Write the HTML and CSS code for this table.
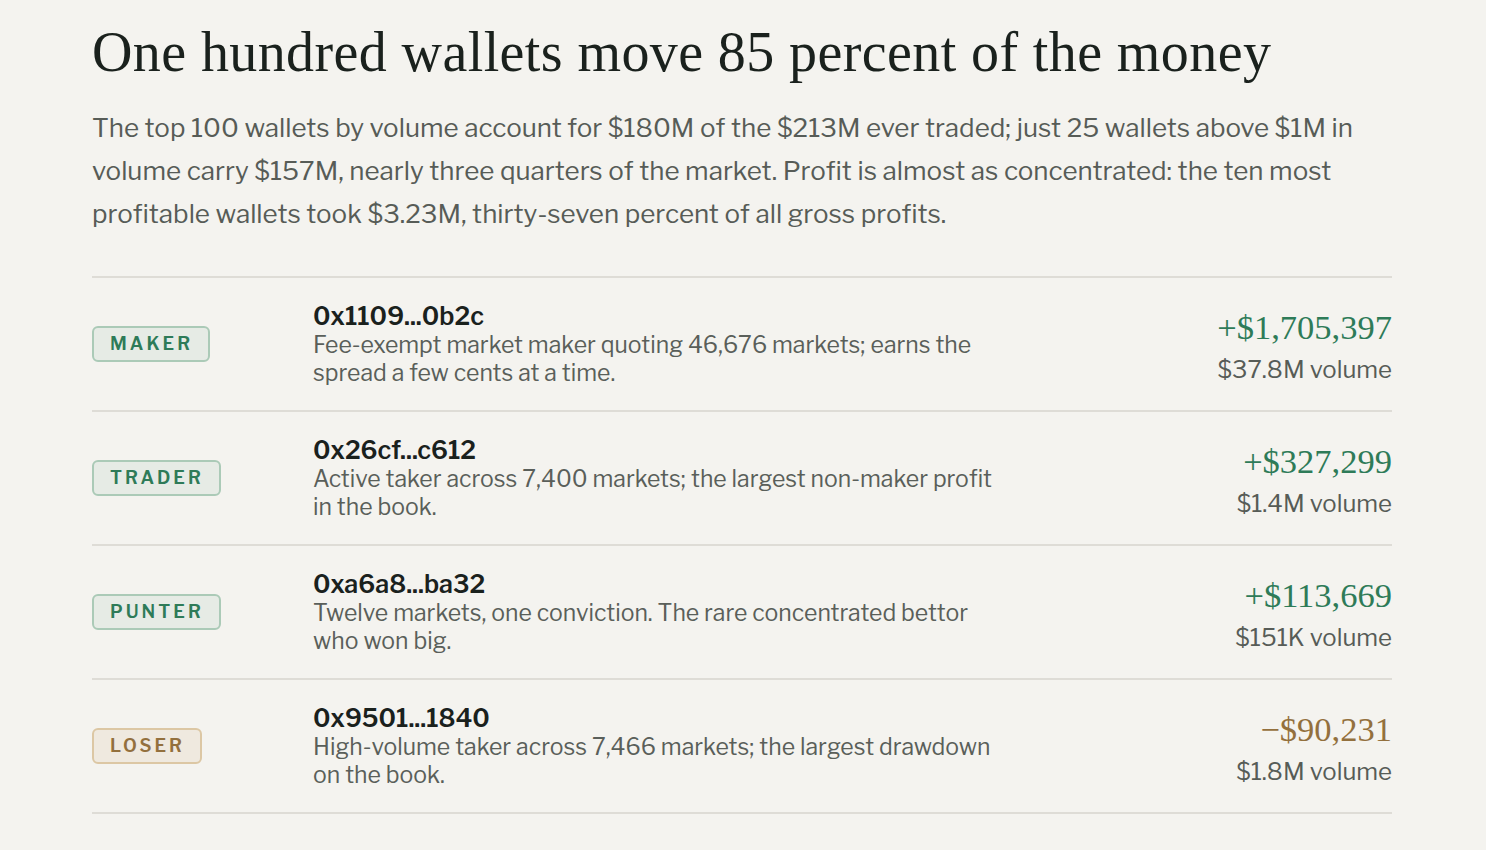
FILE: index.html
```html
<!DOCTYPE html>
<html lang="en">
<head>
<meta charset="utf-8">
<title>One hundred wallets</title>
<link rel="stylesheet" href="styles.css">
</head>
<body>
<main class="page">
  <h1 class="title">One hundred wallets move 85 percent of the money</h1>
  <p class="lede">The top 100 wallets by volume account for $180M of the $213M ever traded; just 25 wallets above $1M in volume carry $157M, nearly three quarters of the market. Profit is almost as concentrated: the ten most profitable wallets took $3.23M, thirty-seven percent of all gross profits.</p>

  <section class="list">
    <div class="row">
      <div class="tagcell"><span class="tag tag-green">MAKER</span></div>
      <div class="info">
        <div class="addr">0x1109...0b2c</div>
        <div class="desc">Fee-exempt market maker quoting 46,676 markets; earns the spread a few cents at a time.</div>
      </div>
      <div class="nums">
        <div class="pnl pos">+$1,705,397</div>
        <div class="vol">$37.8M volume</div>
      </div>
    </div>
    <div class="row">
      <div class="tagcell"><span class="tag tag-green">TRADER</span></div>
      <div class="info">
        <div class="addr">0x26cf...c612</div>
        <div class="desc">Active taker across 7,400 markets; the largest non-maker profit in the book.</div>
      </div>
      <div class="nums">
        <div class="pnl pos">+$327,299</div>
        <div class="vol">$1.4M volume</div>
      </div>
    </div>
    <div class="row">
      <div class="tagcell"><span class="tag tag-green">PUNTER</span></div>
      <div class="info">
        <div class="addr">0xa6a8...ba32</div>
        <div class="desc">Twelve markets, one conviction. The rare concentrated bettor who won big.</div>
      </div>
      <div class="nums">
        <div class="pnl pos">+$113,669</div>
        <div class="vol">$151K volume</div>
      </div>
    </div>
    <div class="row">
      <div class="tagcell"><span class="tag tag-brown">LOSER</span></div>
      <div class="info">
        <div class="addr">0x9501...1840</div>
        <div class="desc">High-volume taker across 7,466 markets; the largest drawdown on the book.</div>
      </div>
      <div class="nums">
        <div class="pnl neg">&minus;$90,231</div>
        <div class="vol">$1.8M volume</div>
      </div>
    </div>
  </section>
</main>
</body>
</html>
```

FILE: styles.css
```css
html, body {
  margin: 0;
  padding: 0;
  background: #f4f3ef;
}

body {
  font-family: "Libre Franklin", "Inter", "Noto Sans", sans-serif;
  color: #1a211d;
}

.page {
  width: 1300px;
  padding: 19px 0 0 92px;
}

.title {
  margin: 0;
  font-family: "Liberation Serif", "DejaVu Serif", serif;
  font-weight: 400;
  font-size: 56px;
  line-height: 66px;
  letter-spacing: 0.4px;
  color: #1a211d;
}

.lede {
  margin: 21px 0 0;
  font-size: 26px;
  line-height: 43px;
  color: #575c57;
}

.list {
  margin-top: 41px;
  border-top: 2px solid #dedcd6;
}

.row {
  display: grid;
  grid-template-columns: 221px 688px 1fr;
  align-items: center;
  height: 132px;
  border-bottom: 2px solid #dedcd6;
}

.tagcell {
  display: flex;
  align-items: center;
}

.tag {
  display: inline-block;
  box-sizing: border-box;
  height: 36px;
  line-height: 32px;
  padding: 0 15px 0 16px;
  border-radius: 6px;
  border: 2px solid;
  font-size: 18px;
  font-weight: 600;
  letter-spacing: 3px;
}

.tag-green {
  color: #2e7b58;
  background: #e6ebe5;
  border-color: #abcab7;
}

.tag-brown {
  color: #93703d;
  background: #efe9df;
  border-color: #dcc7a4;
}

.addr {
  font-size: 25px;
  font-weight: 600;
  line-height: 30px;
  color: #1a211d;
}

.desc {
  font-size: 23px;
  line-height: 28px;
  color: #5a5f5a;
}

.nums {
  text-align: right;
  padding-top: 5px;
}

.pnl {
  font-family: "Liberation Serif", "DejaVu Serif", serif;
  font-size: 34.5px;
  line-height: 40px;
}

.pos {
  color: #2e7b58;
}

.neg {
  color: #93703d;
}

.vol {
  margin-top: 6px;
  font-size: 24px;
  line-height: 34px;
  color: #575c57;
}
```
